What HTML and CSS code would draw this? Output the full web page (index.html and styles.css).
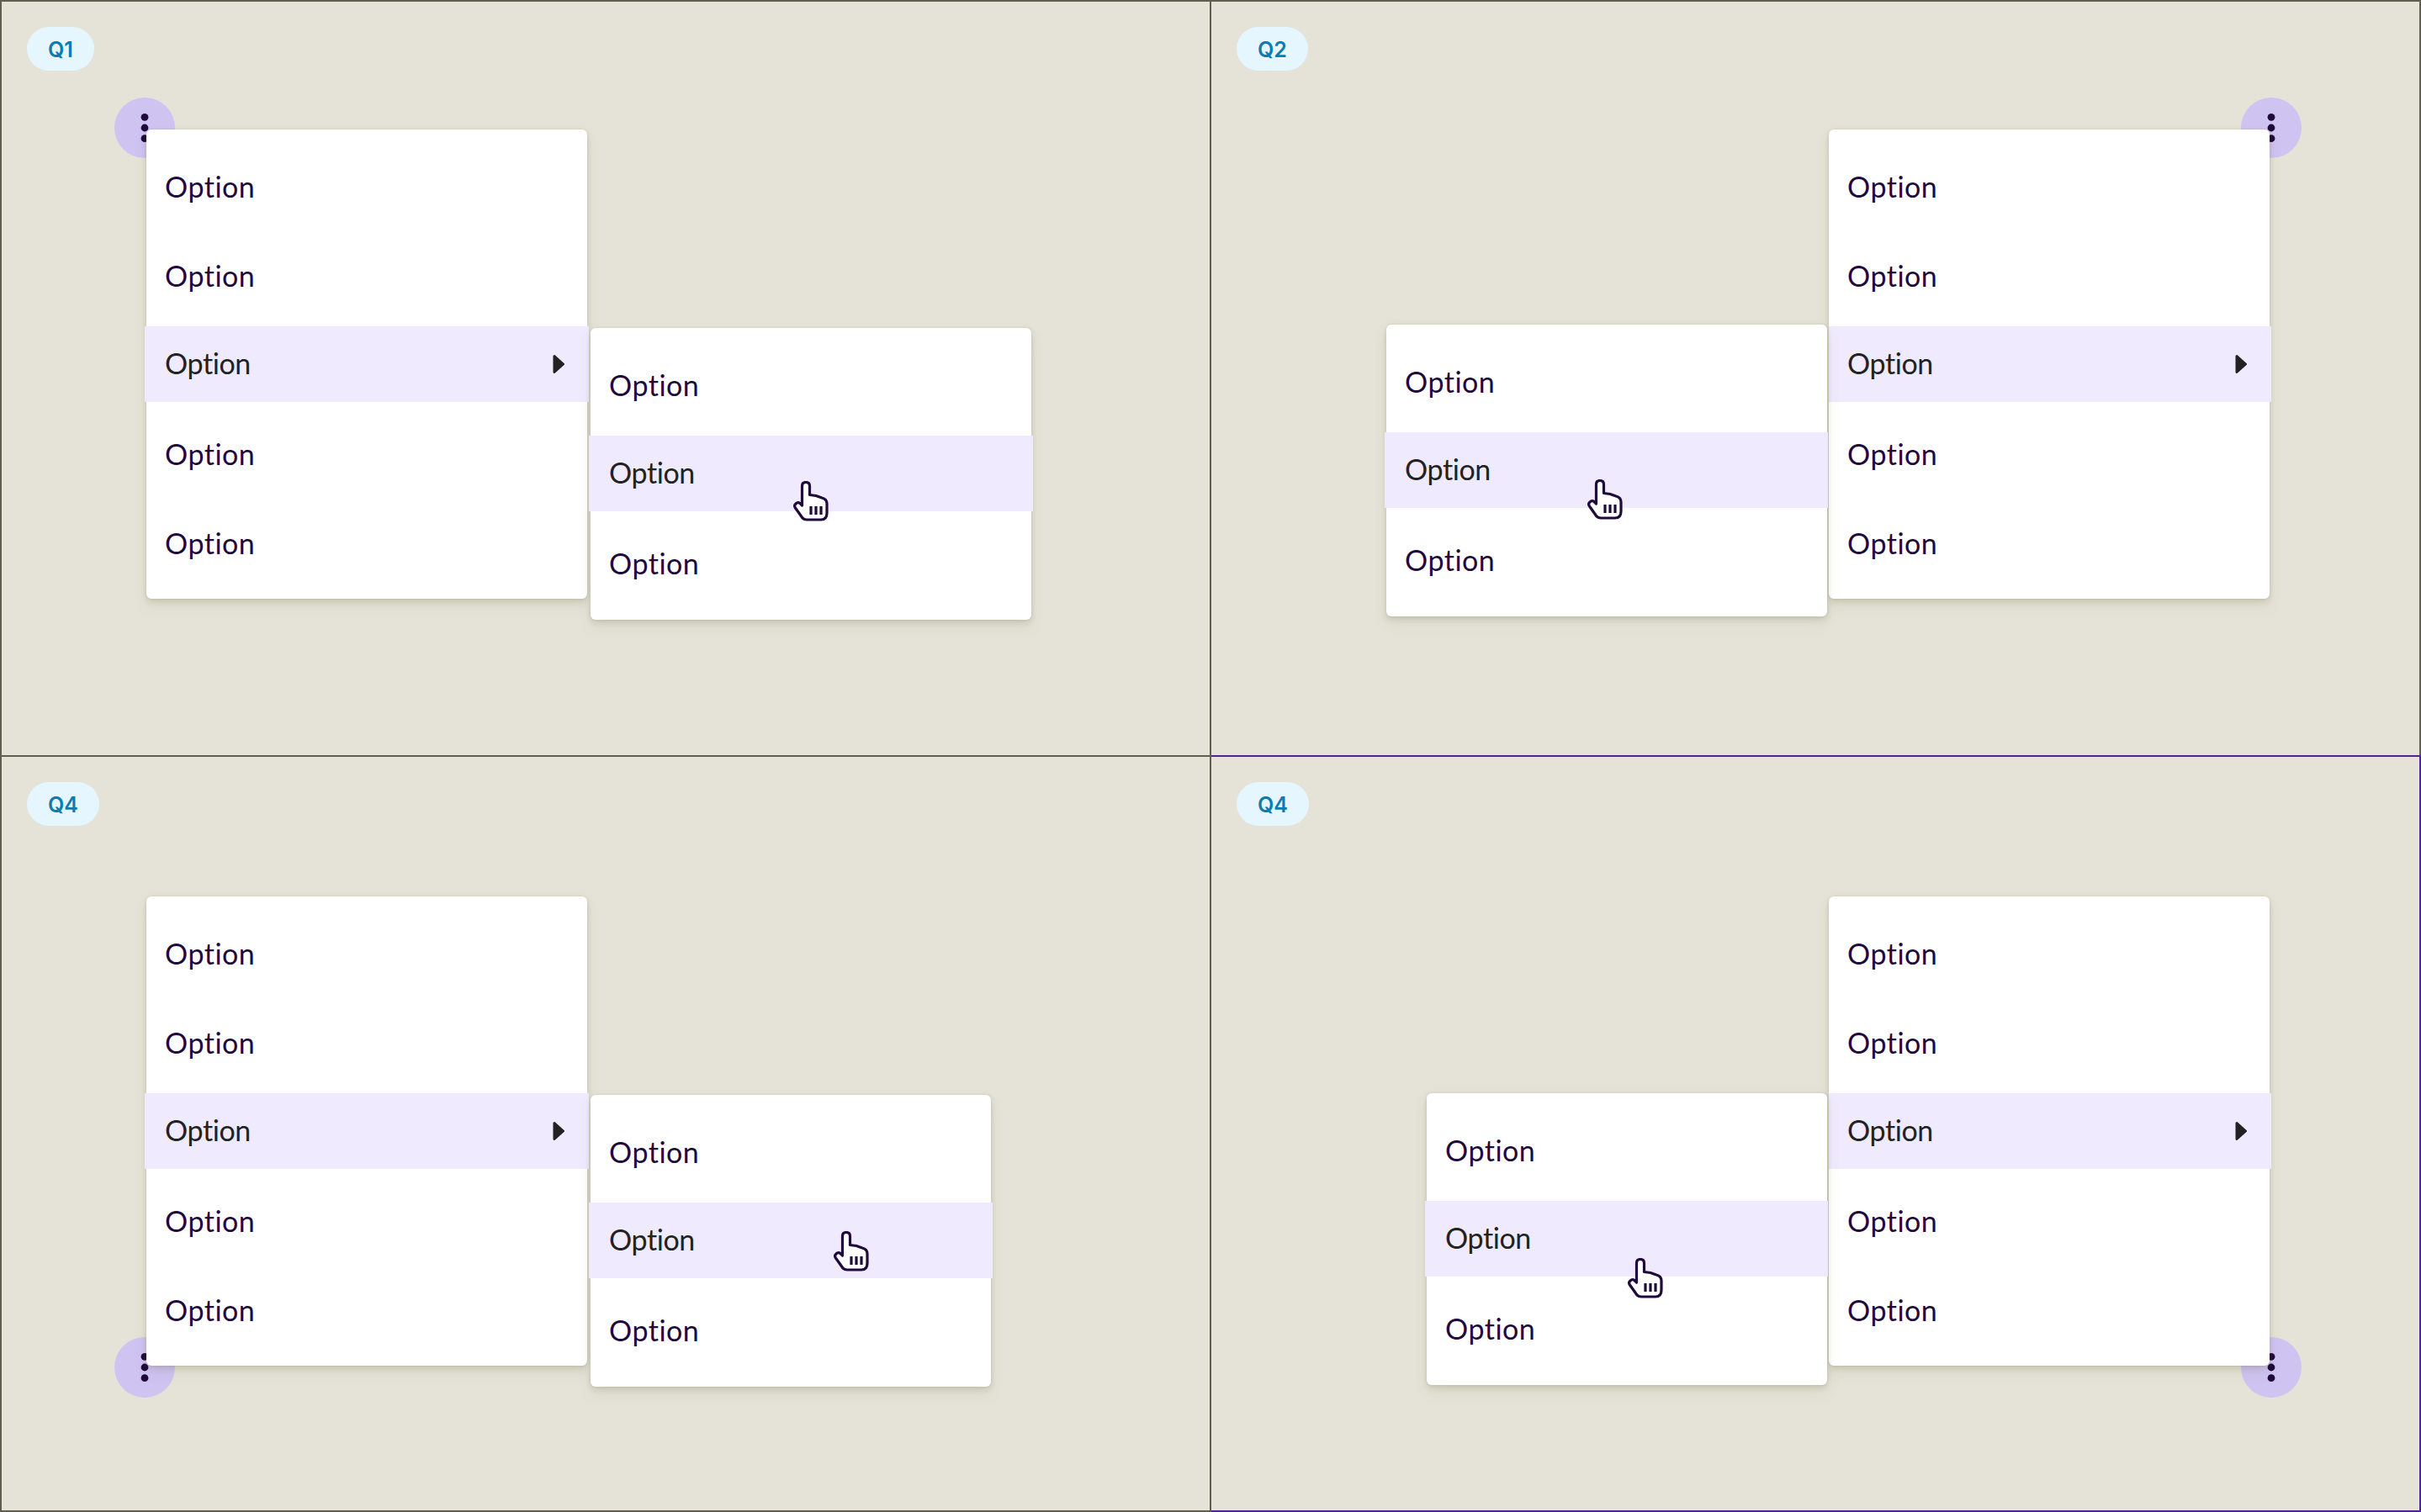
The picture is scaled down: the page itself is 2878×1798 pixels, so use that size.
FILE: index.html
```html
<!DOCTYPE html>
<html lang="en">
<head>
<meta charset="utf-8">
<title>Nested menu placement</title>
<link rel="stylesheet" href="styles.css">
</head>
<body>
<main class="board">

<section class="panel panel-q1">
  <span class="tag">Q1</span>
  <div class="trigger trigger-tl"><svg width="12" height="38" viewBox="0 0 12 38"><circle cx="6" cy="6.3" r="4.4"/><circle cx="6" cy="19" r="4.4"/><circle cx="6" cy="31.7" r="4.4"/></svg></div>
  <div class="stage stage-left stage-top">
    <ul class="menu">
      <li class="row">Option</li>
      <li class="row">Option</li>
      <li class="row row-on"><span>Option</span><svg class="arrow" width="14" height="24" viewBox="0 0 14 24"><path d="M2 2.5 L12.5 12 L2 21.5 Z"/></svg></li>
      <li class="row">Option</li>
      <li class="row">Option</li>
    </ul>
    <ul class="menu sub sub-q1">
      <li class="row">Option</li>
      <li class="row row-on"><span>Option</span></li>
      <li class="row">Option</li>
      <li class="pointer pointer-q1"><svg width="42" height="48" viewBox="0 0 42 48"><path class="hand" d="M10.5 29 V6 Q10.5 1.5 15 1.5 Q19.5 1.5 19.5 6 V16.5 L27 17.5 L34 20 Q40 21.5 40 27 V38 Q40 46 33 46 H16 Q13 46 11 44 L2.5 32 Q0.5 29 3 27 Q5.5 24.5 8 26.5 Z"/><path class="bars" d="M21 30 V40 M27 30 V40 M33 30 V40"/></svg></li>
    </ul>
  </div>
</section>

<section class="panel panel-q2">
  <span class="tag">Q2</span>
  <div class="trigger trigger-tr"><svg width="12" height="38" viewBox="0 0 12 38"><circle cx="6" cy="6.3" r="4.4"/><circle cx="6" cy="19" r="4.4"/><circle cx="6" cy="31.7" r="4.4"/></svg></div>
  <div class="stage stage-right stage-top">
    <ul class="menu sub sub-q2">
      <li class="row">Option</li>
      <li class="row row-on"><span>Option</span></li>
      <li class="row">Option</li>
      <li class="pointer pointer-q2"><svg width="42" height="48" viewBox="0 0 42 48"><path class="hand" d="M10.5 29 V6 Q10.5 1.5 15 1.5 Q19.5 1.5 19.5 6 V16.5 L27 17.5 L34 20 Q40 21.5 40 27 V38 Q40 46 33 46 H16 Q13 46 11 44 L2.5 32 Q0.5 29 3 27 Q5.5 24.5 8 26.5 Z"/><path class="bars" d="M21 30 V40 M27 30 V40 M33 30 V40"/></svg></li>
    </ul>
    <ul class="menu">
      <li class="row">Option</li>
      <li class="row">Option</li>
      <li class="row row-on row-flush"><span>Option</span><svg class="arrow" width="14" height="24" viewBox="0 0 14 24"><path d="M2 2.5 L12.5 12 L2 21.5 Z"/></svg></li>
      <li class="row">Option</li>
      <li class="row">Option</li>
    </ul>
  </div>
</section>

<section class="panel panel-q3">
  <span class="tag">Q4</span>
  <div class="trigger trigger-bl"><svg width="12" height="38" viewBox="0 0 12 38"><circle cx="6" cy="6.3" r="4.4"/><circle cx="6" cy="19" r="4.4"/><circle cx="6" cy="31.7" r="4.4"/></svg></div>
  <div class="stage stage-left stage-bottom">
    <ul class="menu">
      <li class="row">Option</li>
      <li class="row">Option</li>
      <li class="row row-on"><span>Option</span><svg class="arrow" width="14" height="24" viewBox="0 0 14 24"><path d="M2 2.5 L12.5 12 L2 21.5 Z"/></svg></li>
      <li class="row">Option</li>
      <li class="row">Option</li>
    </ul>
    <ul class="menu sub sub-narrow sub-q3">
      <li class="row">Option</li>
      <li class="row row-on"><span>Option</span></li>
      <li class="row">Option</li>
      <li class="pointer pointer-q3"><svg width="42" height="48" viewBox="0 0 42 48"><path class="hand" d="M10.5 29 V6 Q10.5 1.5 15 1.5 Q19.5 1.5 19.5 6 V16.5 L27 17.5 L34 20 Q40 21.5 40 27 V38 Q40 46 33 46 H16 Q13 46 11 44 L2.5 32 Q0.5 29 3 27 Q5.5 24.5 8 26.5 Z"/><path class="bars" d="M21 30 V40 M27 30 V40 M33 30 V40"/></svg></li>
    </ul>
  </div>
</section>

<section class="panel panel-q4">
  <span class="tag">Q4</span>
  <div class="trigger trigger-br"><svg width="12" height="38" viewBox="0 0 12 38"><circle cx="6" cy="6.3" r="4.4"/><circle cx="6" cy="19" r="4.4"/><circle cx="6" cy="31.7" r="4.4"/></svg></div>
  <div class="stage stage-right stage-bottom">
    <ul class="menu sub sub-narrow sub-q4">
      <li class="row">Option</li>
      <li class="row row-on"><span>Option</span></li>
      <li class="row">Option</li>
      <li class="pointer pointer-q4"><svg width="42" height="48" viewBox="0 0 42 48"><path class="hand" d="M10.5 29 V6 Q10.5 1.5 15 1.5 Q19.5 1.5 19.5 6 V16.5 L27 17.5 L34 20 Q40 21.5 40 27 V38 Q40 46 33 46 H16 Q13 46 11 44 L2.5 32 Q0.5 29 3 27 Q5.5 24.5 8 26.5 Z"/><path class="bars" d="M21 30 V40 M27 30 V40 M33 30 V40"/></svg></li>
    </ul>
    <ul class="menu">
      <li class="row">Option</li>
      <li class="row">Option</li>
      <li class="row row-on row-flush"><span>Option</span><svg class="arrow" width="14" height="24" viewBox="0 0 14 24"><path d="M2 2.5 L12.5 12 L2 21.5 Z"/></svg></li>
      <li class="row">Option</li>
      <li class="row">Option</li>
    </ul>
  </div>
</section>

</main>
</body>
</html>
```

FILE: styles.css
```css
* { box-sizing: border-box; }

html, body {
  margin: 0;
  padding: 0;
  background: #e5e3d7;
}

.board {
  display: grid;
  grid-template-columns: 1440px 1438px;
  grid-template-rows: 900px 898px;
  width: 2878px;
  height: 1798px;
  overflow: hidden;
  font-family: "Lato", "Noto Sans", sans-serif;
}

.panel {
  position: relative;
  display: flex;
  flex-direction: column;
  padding: 30px;
  background: #e5e3d7;
  border: 2px solid #5f5f50;
}

/* neighbouring panels share one rule */
.panel-q2 { border-left: 0; }
.panel-q3 { border-top: 0; }
.panel-q4 {
  margin-top: -2px;
  border-left: 0;
  border-color: #52248f;
}

.tag {
  align-self: flex-start;
  display: flex;
  align-items: center;
  height: 52px;
  padding: 2px 25px 0;
  border-radius: 26px;
  background: #e6f6ff;
  color: #0a7cb2;
  font-family: "Inter", sans-serif;
  font-size: 25px;
  font-weight: 600;
}

.trigger {
  position: absolute;
  display: flex;
  align-items: center;
  justify-content: center;
  width: 72px;
  height: 72px;
  border-radius: 50%;
  background: #cfc3f2;
}

.trigger svg { fill: #1f0a3c; display: block; }

.trigger-tl { left: 134px; top: 114px; }
.trigger-tr { right: 140px; top: 114px; }
.trigger-bl { left: 134px; bottom: 134px; }
.trigger-br { right: 140px; bottom: 134px; }

.stage {
  display: flex;
  align-items: flex-start;
}

.stage-top { margin-top: 70px; }
.stage-bottom { margin-top: 84px; }
.stage-left { padding-left: 142px; gap: 4px; }
.stage-right { justify-content: flex-end; padding-right: 148px; gap: 2px; }

.menu {
  position: relative;
  width: 524px;
  margin: 0;
  padding: 14px 0;
  list-style: none;
  background: #fff;
  border-radius: 6px;
  box-shadow: 0 0 3px rgba(90, 85, 40, 0.14), 0 4px 6px rgba(90, 85, 40, 0.14), 0 8px 18px rgba(90, 85, 40, 0.08);
  color: #1f0a3c;
  font-size: 34px;
  letter-spacing: 0.5px;
}

.sub { padding-bottom: 15px; z-index: 1; }
.sub-narrow { width: 476px; }
.sub-q1 { margin-top: 236px; }
.sub-q2 { margin-top: 232px; }
.sub-q3 { margin-top: 236px; }
.sub-q4 { margin-top: 234px; }

.row {
  display: flex;
  align-items: center;
  justify-content: space-between;
  height: 106px;
  padding: 0 22px;
}

.row-on {
  height: 90px;
  margin: 8px -2px;
  padding: 0 29px 4px 24px;
  background: #efeafd;
  color: #222;
  letter-spacing: -0.4px;
}

.stage-right .sub .row-on { margin-right: -1px; }
.row-flush { margin-left: 0; padding-left: 22px; }

.arrow {
  display: block;
  fill: #222;
  stroke: #222;
  stroke-width: 3px;
  stroke-linejoin: round;
  margin-top: 4px;
}

.pointer {
  position: absolute;
  width: 42px;
  height: 48px;
}

.pointer svg { display: block; }

.hand {
  fill: #fff;
  stroke: #1f0a3c;
  stroke-width: 3.2px;
  stroke-linejoin: round;
}

.bars {
  fill: none;
  stroke: #1f0a3c;
  stroke-width: 3.2px;
}

.pointer-q1 { left: 241px; top: 182px; }
.pointer-q2 { left: 239px; top: 184px; }
.pointer-q3 { left: 289px; top: 162px; }
.pointer-q4 { left: 239px; top: 196px; }
```
